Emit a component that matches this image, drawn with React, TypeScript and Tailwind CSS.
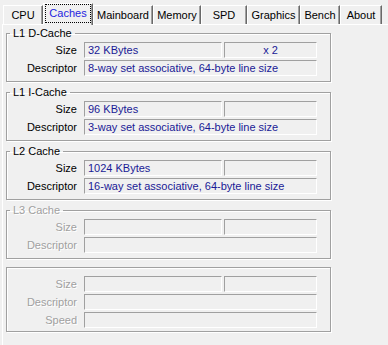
import React from "react";

interface Tab {
  label: string;
  w: string;
  active?: boolean;
}

const tabs: Tab[] = [
  { label: "CPU", w: "w-[40px]" },
  { label: "Caches", w: "w-[50px]", active: true },
  { label: "Mainboard", w: "w-[60px]" },
  { label: "Memory", w: "w-[48px]" },
  { label: "SPD", w: "w-[46px]" },
  { label: "Graphics", w: "w-[53px]" },
  { label: "Bench", w: "w-[40px]" },
  { label: "About", w: "w-[42px]" },
];

interface Row {
  label: string;
  value?: string;
  extra?: string;
  split?: boolean;
}

interface Group {
  title?: string;
  disabled?: boolean;
  rows: Row[];
}

const groups: Group[] = [
  {
    title: "L1 D-Cache",
    rows: [
      { label: "Size", value: "32 KBytes", extra: "x 2", split: true },
      { label: "Descriptor", value: "8-way set associative, 64-byte line size" },
    ],
  },
  {
    title: "L1 I-Cache",
    rows: [
      { label: "Size", value: "96 KBytes", split: true },
      { label: "Descriptor", value: "3-way set associative, 64-byte line size" },
    ],
  },
  {
    title: "L2 Cache",
    rows: [
      { label: "Size", value: "1024 KBytes", split: true },
      { label: "Descriptor", value: "16-way set associative, 64-byte line size" },
    ],
  },
  {
    title: "L3 Cache",
    disabled: true,
    rows: [
      { label: "Size", split: true },
      { label: "Descriptor" },
    ],
  },
  {
    disabled: true,
    rows: [
      { label: "Size", split: true },
      { label: "Descriptor" },
      { label: "Speed" },
    ],
  },
];

const sunken =
  "h-[16px] border border-t-[#a0a0a0] border-l-[#a0a0a0] border-b-white border-r-white flex items-center text-[#1a1a96] whitespace-nowrap overflow-hidden";

const disabledText = "text-[#a0a0a0] [text-shadow:1px_1px_0_#fff]";

function TabButton({ tab }: { tab: Tab }) {
  if (tab.active) {
    return (
      <div
        className={`relative z-10 -mb-px h-[22px] ${tab.w} bg-[#f0f0f0] border-t border-l border-r border-t-white border-l-white border-r-[#696969] shadow-[inset_-1px_0_0_#a0a0a0]`}
      >
        <span className="mx-px h-[19px] border border-dotted border-black flex items-center justify-center text-[#2424e0]">
          {tab.label}
        </span>
      </div>
    );
  }
  return (
    <div
      className={`h-[19px] ${tab.w} border-t border-l border-r border-t-white border-l-white border-r-[#696969] shadow-[inset_-1px_0_0_#a0a0a0] flex items-center justify-center pt-px`}
    >
      {tab.label}
    </div>
  );
}

function CacheGroup({ group, last }: { group: Group; last?: boolean }) {
  return (
    <fieldset
      className={`w-[325px] min-w-0 border border-[#a0a0a0] shadow-[inset_1px_1px_0_#fff,1px_1px_0_#fff] ${
        last ? "mt-[4px] pt-[8px] pb-[3px]" : "pt-[2px] pb-[5px]"
      }`}
    >
      {group.title && (
        <legend className={`ml-[3px] px-[3px] leading-[13px] ${group.disabled ? disabledText : ""}`}>
          {group.title}
        </legend>
      )}
      <div className="flex flex-col gap-[2px]">
        {group.rows.map((row) => (
          <div key={row.label} className="flex items-center h-[16px]">
            <span className={`w-[70px] mr-[7px] text-right ${group.disabled ? disabledText : ""}`}>
              {row.label}
            </span>
            {row.split ? (
              <>
                <div className={`${sunken} w-[138px] pl-[3px]`}>{row.value}</div>
                <div className={`${sunken} w-[93px] ml-[2px] justify-center`}>{row.extra}</div>
              </>
            ) : (
              <div className={`${sunken} w-[233px] pl-[3px]`}>{row.value}</div>
            )}
          </div>
        ))}
      </div>
    </fieldset>
  );
}

export default function App() {
  return (
    <div className="w-[388px] h-[345px] overflow-hidden bg-[#f0f0f0] text-black text-[11px] leading-[13px] font-['Liberation_Sans',Arial,sans-serif]">
      {/* Tab strip */}
      <div className="flex items-end h-[24px] pl-[3px]">
        {tabs.map((t) => (
          <TabButton key={t.label} tab={t} />
        ))}
      </div>

      {/* Tab page */}
      <div className="ml-[2px] h-[330px] border-t border-l border-white pt-[2px] pl-[3px] flex flex-col gap-[4px]">
        {groups.map((g, i) => (
          <CacheGroup key={i} group={g} last={i === groups.length - 1} />
        ))}
      </div>
    </div>
  );
}
